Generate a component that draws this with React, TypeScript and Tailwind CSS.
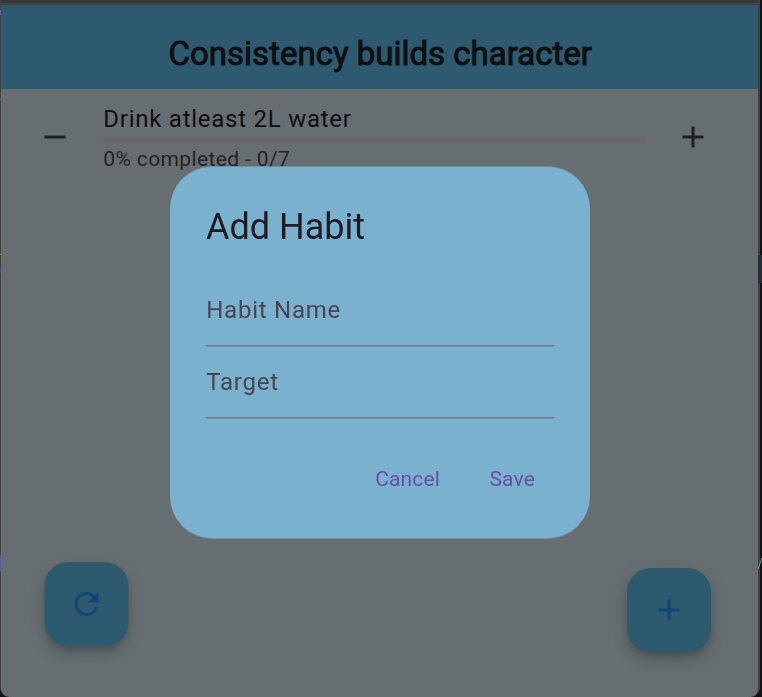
import React from "react";

const REFRESH =
  "M17.65 6.35A7.958 7.958 0 0 0 12 4a8 8 0 1 0 7.73 10h-2.08A5.99 5.99 0 0 1 12 18a6 6 0 1 1 0-12c1.66 0 3.14.69 4.22 1.78L13 11h7V4z";
const PLUS = "M19 13h-6v6h-2v-6H5v-2h6V5h2v6h6z";
const MINUS = "M19 13H5v-2h14z";

function Icon({ path, className }: { path: string; className: string }) {
  return (
    <svg viewBox="0 0 24 24" className={className} fill="currentColor">
      <path d={path} />
    </svg>
  );
}

function Fab({ path, label }: { path: string; label: string }) {
  return (
    <button
      aria-label={label}
      className="flex size-[84px] items-center justify-center rounded-[24px] bg-[#2d5a6f] text-[#114477] shadow-[0_5px_8px_-2px_rgba(0,0,0,0.2),0_9px_15px_rgba(0,0,0,0.12),0_2px_26px_rgba(0,0,0,0.04)]"
    >
      <Icon path={path} className="size-9" />
    </button>
  );
}

function Field({ label }: { label: string }) {
  return (
    <div className="flex h-[72px] flex-col">
      <div className="flex h-[70px] items-center pl-[0.25px] text-[24px] leading-[36px] tracking-[0.75px] text-[#49454f]">
        {label}
      </div>
      <div className="h-px bg-[#777583]" />
      <div className="h-px bg-[#7995a9]" />
    </div>
  );
}

function AddHabitDialog() {
  return (
    <div className="absolute top-[166px] left-[170px] h-[373px] w-[420px]">
      <div className="absolute inset-x-0 top-0 h-[372px] translate-y-[0.5px] rounded-[42px] bg-[#7ab1cf] will-change-transform" />
      <div className="relative flex flex-col px-9 pt-[37px]">
        <h2 className="text-[36px] leading-[48px] text-[#1d1b20]">Add Habit</h2>
        <div className="mt-6">
          <Field label="Habit Name" />
          <Field label="Target" />
        </div>
        <div className="mt-[31px] flex h-[60px] items-center justify-end gap-[49.5px] pr-[19px] text-[21px] tracking-[0.15px] text-[#6750a4]">
          <button>Cancel</button>
          <button>Save</button>
        </div>
      </div>
    </div>
  );
}

export default function App() {
  return (
    <div className="relative flex h-[697px] w-[762px] flex-col overflow-hidden bg-[#101216] font-['Roboto',sans-serif]">
      <div className="flex h-full w-[760px] flex-col overflow-hidden rounded-b-[9px] border-r-2 border-l border-[#424242] bg-[#666e71]">
        <div className="h-[3px] shrink-0 bg-[#393939]" />
        <div className="h-[2px] shrink-0 bg-[#454545]" />
        <header className="flex h-[84px] shrink-0 items-center justify-center bg-[#2d5a6f] pt-[14px] pl-[1.5px]">
          <h1 className="text-[33px] leading-[42px] font-normal text-[#0f0f11] [-webkit-text-stroke:0.95px_#0f0f11]">
            Consistency builds character
          </h1>
        </header>
        <div className="flex pt-[12px] pr-[47px] pl-[36px] text-[#202024]">
          <Icon path={MINUS} className="mt-[18px] size-9" />
          <div className="ml-[30px] w-[542px]">
            <div className="h-[36px] pl-[0.25px] text-[24px] leading-[36px] tracking-[0.75px] text-[#0f0e10]">
              Drink atleast 2L water
            </div>
            <div className="h-[6px] bg-[#6b6667]" />
            <div className="pt-px pl-[0.25px] text-[21px] leading-[30px] tracking-[0.375px] text-[#252328]">
              0% completed - 0/7
            </div>
          </div>
          <Icon path={PLUS} className="mt-[18px] ml-[30px] size-9" />
        </div>
        <div className="mt-auto mb-[45px] flex items-end justify-between pr-[47px] pl-[43px]">
          <div className="mb-[6px] translate-x-[0.5px] will-change-transform">
            <Fab path={REFRESH} label="Reset progress" />
          </div>
          <Fab path={PLUS} label="Add habit" />
        </div>
      </div>
      <div className="absolute top-[10px] left-0 h-[5px] w-px bg-[#6260a5]" />
      <div className="absolute top-[98px] left-0 h-[3px] w-px bg-[#3d6263]" />
      <div className="absolute top-[254px] left-0 h-px w-px bg-[#a77d55]" />
      <div className="absolute top-[269px] left-0 h-[4px] w-px bg-[#454580]" />
      <div className="absolute top-[555px] left-0 h-[16px] w-px bg-[#53609a]" />
      <div className="absolute top-[255px] left-[758px] h-[28px] w-1 bg-[#252b38]" />
      <svg className="absolute top-[556px] left-[758px] h-[14px] w-1" viewBox="0 0 4 14">
        <path d="M0 13 4 2" stroke="#85919a" fill="none" />
      </svg>
      <AddHabitDialog />
    </div>
  );
}
